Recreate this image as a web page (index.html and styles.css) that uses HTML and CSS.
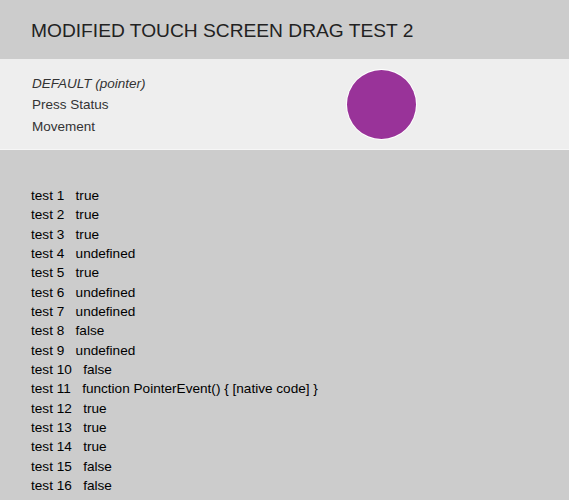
FILE: index.html
```html
<!DOCTYPE html>
<html>
<head>
<meta charset="utf-8">
<link rel="stylesheet" href="styles.css">
</head>
<body>
<header class="header"><h1 class="title">MODIFIED TOUCH SCREEN DRAG TEST 2</h1></header>
<section class="panel">
  <div class="info">
    <div class="mode">DEFAULT (pointer)</div>
    <div class="line">Press Status</div>
    <div class="line">Movement</div>
  </div>
  <div class="dot"></div>
</section>
<ul class="tests">
  <li>test 1 &nbsp; true</li>
  <li>test 2 &nbsp; true</li>
  <li>test 3 &nbsp; true</li>
  <li>test 4 &nbsp; undefined</li>
  <li>test 5 &nbsp; true</li>
  <li>test 6 &nbsp; undefined</li>
  <li>test 7 &nbsp; undefined</li>
  <li>test 8 &nbsp; false</li>
  <li>test 9 &nbsp; undefined</li>
  <li>test 10 &nbsp; false</li>
  <li>test 11 &nbsp; function PointerEvent() { [native code] }</li>
  <li>test 12 &nbsp; true</li>
  <li>test 13 &nbsp; true</li>
  <li>test 14 &nbsp; true</li>
  <li>test 15 &nbsp; false</li>
  <li>test 16 &nbsp; false</li>
</ul>
</body>
</html>
```
FILE: styles.css
```css
html, body {
  margin: 0;
  padding: 0;
  background: #cccccc;
  font-family: "Liberation Sans", Arial, sans-serif;
}
.header {
  height: 59px;
  padding: 0 31px;
}
.title {
  margin: 0;
  font-size: 19.2px;
  font-weight: normal;
  line-height: 61px;
  color: #222222;
}
.panel {
  display: flex;
  align-items: center;
  background: #eeeeee;
  border-bottom: 1px solid #f6f6f6;
  padding: 11px 32px 10px 32px;
}
.info {
  width: 315px;
  padding-top: 1px;
  font-size: 13.5px;
  line-height: 21.5px;
  color: #333333;
}
.mode {
  font-style: italic;
}
.dot {
  width: 69px;
  height: 69px;
  border-radius: 50%;
  background: #993399;
  box-shadow: 0 0 0 1px #ffffff;
}
.tests {
  list-style: none;
  margin: 0;
  padding: 36px 31px 0 31px;
  font-size: 13.6px;
  line-height: 19.33px;
  color: #000000;
}
```
